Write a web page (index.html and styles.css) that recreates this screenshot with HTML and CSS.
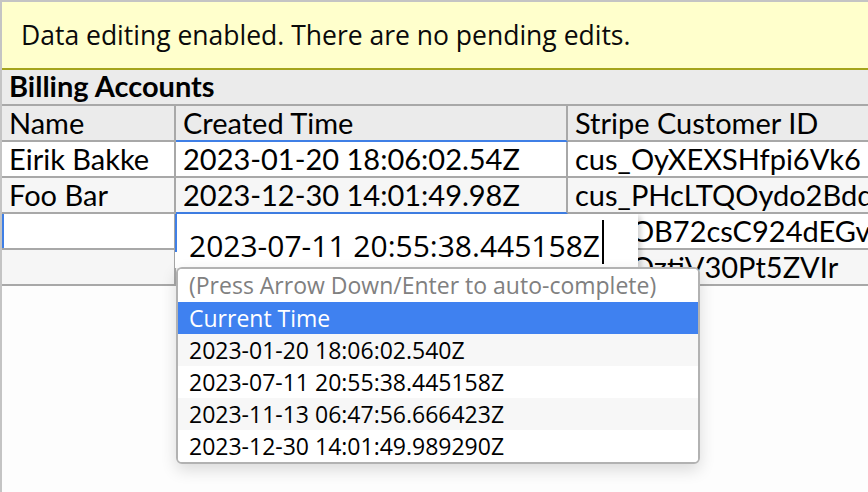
FILE: index.html
```html
<!DOCTYPE html>
<html>
<head>
<meta charset="utf-8">
<link rel="stylesheet" href="styles.css">
</head>
<body>
<div class="frame">
  <div class="banner">Data editing enabled. There are no pending edits.</div>
  <div class="title">Billing Accounts</div>
  <div class="grid">
    <div class="cell head">Name</div>
    <div class="cell head sel-col">Created Time</div>
    <div class="cell head last">Stripe Customer ID</div>

    <div class="cell">Eirik Bakke</div>
    <div class="cell">2023-01-20 18:06:02.54Z</div>
    <div class="cell last">cus_OyXEXSHfpi6Vk6</div>

    <div class="cell alt">Foo Bar</div>
    <div class="cell alt sel-bottom">2023-12-30 14:01:49.98Z</div>
    <div class="cell alt last">cus_PHcLTQOydo2Bdd</div>

    <div class="cell row-sel"></div>
    <div class="cell"></div>
    <div class="cell last">cus_OB72csC924dEGv</div>

    <div class="cell alt"></div>
    <div class="cell alt"></div>
    <div class="cell alt last">cus_OztiV30Pt5ZVIr</div>
  </div>

  <div class="editor"><span class="edit-text">2023-07-11 20:55:38.445158Z</span><span class="caret"></span></div>
  <div class="dropdown">
    <div class="item hint">(Press Arrow Down/Enter to auto-complete)</div>
    <div class="item active">Current Time</div>
    <div class="item alt">2023-01-20 18:06:02.540Z</div>
    <div class="item">2023-07-11 20:55:38.445158Z</div>
    <div class="item alt">2023-11-13 06:47:56.666423Z</div>
    <div class="item">2023-12-30 14:01:49.989290Z</div>
  </div>
</div>
</body>
</html>
```
FILE: styles.css
```css
html, body {
  margin: 0;
  padding: 0;
  background: #fdfdfd;
  overflow: hidden;
}
.frame {
  position: relative;
  width: 866px;
  height: 490px;
  border-top: 2px solid #c4c4c4;
  border-left: 2px solid #c4c4c4;
  background: #fdfdfd;
  overflow: hidden;
}
.banner {
  height: 68px;
  box-sizing: border-box;
  background: #ffffcc;
  border-bottom: 2px solid #a4a41c;
  padding: 0 0 0 19px;
  display: flex;
  align-items: center;
  font-family: "Open Sans", "Noto Sans", sans-serif;
  font-size: 26.5px;
  color: #0a0a0a;
}
.title {
  height: 36px;
  box-sizing: border-box;
  background: #ebebeb;
  font-family: Lato, sans-serif;
  font-weight: 700;
  font-size: 29px;
  line-height: 32px;
  padding: 0 0 0 7px;
  border-bottom: 2px solid #a8a8a8;
  color: #000;
}
.grid {
  display: grid;
  grid-template-columns: 174px 392px 1fr;
  width: 960px;
  font-family: Lato, sans-serif;
  font-size: 29px;
  line-height: 32px;
  color: #000;
}
.cell {
  height: 36px;
  box-sizing: border-box;
  border-bottom: 2px solid #a8a8a8;
  border-right: 2px solid #a8a8a8;
  padding: 1px 0 0 7px;
  background: #ffffff;
  white-space: nowrap;
  overflow: hidden;
}
.cell.last { border-right: none; }
.cell.alt { background: #f6f6f6; }
.cell.head { background: #ebebeb; }
.cell.sel-col { border-bottom-color: #3f7fe6; }
.cell.sel-bottom { border-bottom-color: #3f7fe6; }
.cell.row-sel { box-shadow: inset 2px 0 0 #3f7fe6; }

.editor {
  position: absolute;
  left: 173px;
  top: 212px;
  width: 463px;
  height: 54px;
  box-sizing: border-box;
  background: #fff;
  box-shadow: 3px 2px 5px rgba(0,0,0,0.18);
  padding: 0 0 0 14px;
  font-family: "Open Sans", "Noto Sans", sans-serif;
  font-size: 30px;
  line-height: 54px;
  color: #000;
  white-space: nowrap;
}
.editor::before {
  content: "";
  position: absolute;
  left: 0;
  top: 0;
  width: 2px;
  height: 38px;
  background: #3f7fe6;
}
.edit-text {
  display: inline-block;
  vertical-align: top;
  padding-top: 5px;
  line-height: 54px;
}
.caret {
  display: inline-block;
  vertical-align: top;
  width: 2px;
  height: 44px;
  background: #000;
  margin-top: 6px;
  margin-left: 2px;
}
.dropdown {
  position: absolute;
  left: 174px;
  top: 265px;
  width: 524px;
  box-sizing: border-box;
  border: 2px solid #b2b2b2;
  border-radius: 6px;
  background: #fff;
  box-shadow: 0 6px 16px rgba(0,0,0,0.14);
  overflow: hidden;
  font-family: "Open Sans", "Noto Sans", sans-serif;
  font-size: 23px;
}
.item {
  height: 32px;
  line-height: 32px;
  padding-left: 11px;
  color: #000;
  background: #fff;
  white-space: nowrap;
}
.item.hint { color: #808080; height: 33px; }
.item.active { background: #3f81f0; color: #fff; }
.item.alt { background: #f7f7f7; }
```
